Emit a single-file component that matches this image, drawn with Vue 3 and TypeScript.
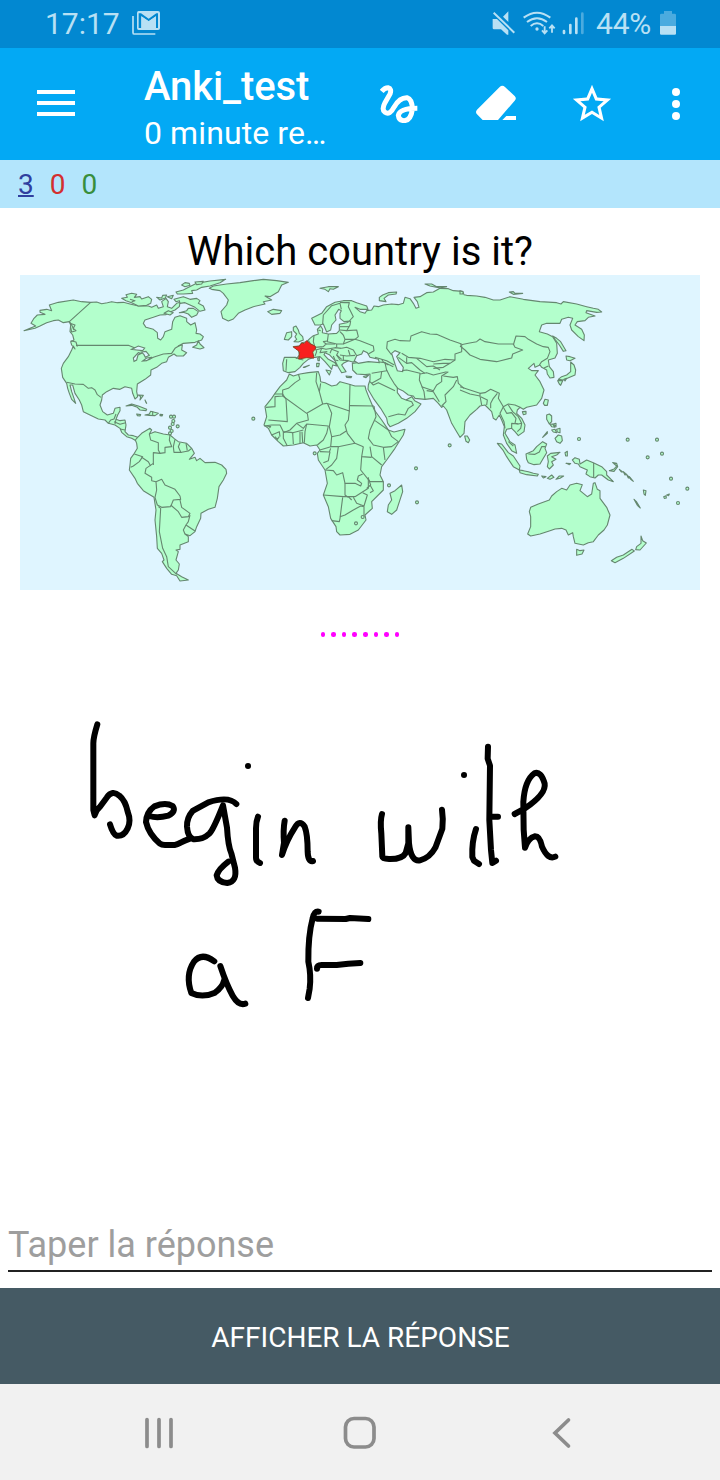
<script setup lang="ts">
type Pt = [number, number]
const at = (dx: number, dy: number, s: string): string =>
  s.split(' ').map(p => {
    const [x, y] = p.split(',').map(Number) as Pt
    return `${x + dx},${y + dy}`
  }).join(' ')

// Map sheets: each holds coordinates relative to its own corner
const nw = (s: string) => at(0, 0, s)
const mid = (s: string) => at(660, 0, s)
const ne = (s: string) => at(1320, 0, s)
const sw = (s: string) => at(240, 450, s)
const se = (s: string) => at(1320, 450, s)

const eurasia =
  mid('215,145 245,130 260,110 285,97 310,92 335,92 350,98 380,108 384,118 360,118 345,112 360,125 375,130 380,122 395,120 402,108 415,110 430,105 455,102 475,104 490,100 495,82 510,86 520,100 528,115 537,112 532,95 522,82 540,80 560,68 580,66 600,55 625,56 640,62 668,64 672,74') + ' ' +
  ne('20,76 50,78 75,82 100,90 120,90 150,80 190,88 240,95 290,98 303,102 310,95 350,102 380,110 400,115 415,118 425,126 410,127 380,122 378,128 405,138 385,142 375,152 352,155 345,165 365,178 373,195 372,212 355,200 335,180 330,165 338,145 325,142 305,148 300,160 260,160 245,165 238,185 262,192 278,200 290,220 292,250 285,264 265,270 268,290 280,305 282,322 270,324 262,312 260,300 245,292 240,285 225,292 222,280 205,295 215,302 235,302 225,315 240,335 252,360 245,385 230,405 200,412 190,418 180,412 172,420 170,430 185,445 195,465 192,485 175,497 165,485 155,475 140,478 135,490 150,515 165,525 170,550 155,542 140,520 130,495 133,470 125,450 118,435 108,450 100,445 95,425 75,405 60,408 50,418 30,435 15,455 12,490 0,502') + ' ' +
  mid('650,485 635,460 620,420 610,408 605,412 595,400 580,385 555,388 525,385 520,378 505,375 488,362 472,355 472,368 485,385 498,390 515,380 524,392 543,402 525,425 500,445 475,460 450,470 443,460 440,445 422,415 400,385 384,358 385,345 390,330 390,312 375,314 350,312 338,300 337,280 370,275 365,273 350,272 338,276 325,272 310,280 305,285 318,305 305,308 295,292 285,272 268,254 255,248 252,254 265,268 285,278 290,288 278,285 275,298 268,290 255,275 240,260 225,262 205,268 190,280 180,292 165,305 145,308 130,302 128,280 133,262 165,262 170,265 178,255 175,240 160,230 178,228 185,218 200,215 210,205 220,197 235,192 232,178 242,168 248,178 247,188 265,192 290,190 298,182 298,163 320,158 330,153 312,155 300,145 300,130 304,122 296,118 285,135 288,150 275,165 272,180 260,186 250,162 240,165 225,165 215,145')

const africa = mid('148,312 160,318 180,312 205,308 235,305 240,320 242,335 255,338 275,348 290,345 300,335 325,342 345,348 375,348 378,360 388,385 403,420 425,450 440,472 445,480 462,486 495,478 490,495 465,535 440,570 425,590 420,615 430,635 430,660 395,695 397,715 375,735 378,750 355,780 330,793 300,795 290,785 288,770 272,745 265,710 250,675 262,640 255,600 235,570 232,550 240,540 230,525 210,528 190,518 160,525 130,528 115,515 95,495 85,475 72,465 80,440 75,410 95,385 105,370 120,350 140,330')

const land: string[] = [
  eurasia,
  africa,
  // mainland North and Central America
  nw('12,182 30,175 47,168 33,160 42,145 52,135 75,133 60,127 60,121 80,118 95,122 88,105 115,97 160,90 185,95 212,97 230,96 245,101 262,98 275,95 292,98 310,97 330,102 355,108 385,108 395,112 410,105 415,115 430,110 425,95 438,85 445,95 442,110 455,115 470,100 480,97 478,110 465,120 445,128 438,134 420,135 400,142 375,150 370,160 378,172 400,178 412,188 413,205 422,210 430,200 435,185 455,178 458,155 465,142 480,137 500,145 500,155 512,165 525,158 530,180 528,190 540,192 550,200 545,210 525,217 490,220 475,228 487,225 485,240 500,248 490,258 470,258 462,252 445,262 440,275 425,280 410,292 393,300 392,315 375,328 352,342 350,365 353,380 345,387 338,370 335,355 315,350 300,358 280,355 260,365 247,375 245,390 240,405 248,425 262,435 280,430 285,415 300,412 300,422 293,435 288,448 300,452 315,450 318,465 315,485 325,495 340,497 353,502 348,512 335,505 320,500 305,487 300,475 285,465 265,460 255,450 235,447 210,435 190,425 185,405 178,390 165,370 158,345 150,345 155,365 162,385 167,400 155,388 148,370 143,355 140,340 128,322 124,295 130,280 145,260 155,240 160,228 165,237 155,225 152,215 162,210 158,195 150,185 152,165 148,155 130,158 115,150 100,152 80,158 60,168 45,175'),
  // South America
  sw('113,52 125,40 150,25 155,30 148,42 165,35 190,42 210,45 222,55 235,65 260,70 275,85 283,100 268,118 285,112 290,122 300,115 315,128 345,127 365,135 378,148 380,160 370,180 357,200 352,235 345,262 325,268 303,280 302,295 290,320 285,335 270,347 255,342 265,350 265,365 240,375 240,388 228,390 235,395 228,420 238,432 235,450 228,460 245,470 265,480 240,483 230,467 215,463 200,445 187,425 192,420 185,400 172,385 170,350 165,300 168,270 162,232 130,212 112,190 105,175 88,150 90,135 92,115 103,100 112,85 110,70 106,60'),
  // Greenland and Iceland
  nw('568,55 580,48 620,42 660,38 700,32 730,28 770,32 805,37 785,45 775,65 750,80 735,78 755,90 730,95 735,102 700,110 675,120 655,130 640,147 625,153 608,145 603,125 620,105 625,90 610,70 600,62 575,58'),
  mid('83,125 100,118 125,122 120,130 95,133'),
  // Arctic archipelago
  nw('305,85 322,82 318,74 335,70 350,73 343,82 360,80 365,87 385,80 395,88 392,100 380,106 355,108 335,98 318,92'),
  nw('410,82 425,84 428,76 440,75 436,84 420,90'),
  nw('442,80 460,76 455,86'),
  nw('462,88 490,80 510,88 530,85 540,92 535,100 550,108 555,120 540,124 525,112 510,105 495,98 480,100 478,92 468,95'),
  nw('478,128 500,122 505,115 520,115 535,125 530,135 515,142 505,132 490,127'),
  nw('432,130 445,122 460,128 450,135'),
  nw('468,66 490,60 500,55 530,40 570,33 617,28 600,38 570,48 545,52 530,60 515,62 518,70 490,72 472,72'),
  nw('485,45 495,38 508,40 510,46 495,50'),
  nw('525,36 550,34 545,42 530,44'),
  nw('518,232 530,225 535,212 540,222 552,233 540,237'),
  // Caribbean
  nw('318,408 335,402 355,408 380,418 378,422 360,420 352,412 335,406'),
  nw('375,435 388,432 392,424 415,430 405,437 388,436'),
  nw('350,432 362,434 360,438 352,437'),
  nw('420,433 428,434 426,438 420,437'),
  nw('355,375 370,376 360,390 362,380'),
  nw('375,390 380,400 378,398'),
  // British Isles and European islands
  mid('162,215 170,208 165,200 170,192 160,182 160,172 168,168 175,180 178,190 188,200 190,210 175,216'),
  mid('133,208 140,188 155,185 155,200 145,210'),
  mid('240,55 265,50 295,50 280,58 270,56 265,65 255,58'),
  mid('418,92 418,82 428,75 445,68 470,66 468,72 445,75 432,85 438,95'),
  mid('555,42 575,42 590,50 620,50 600,54 570,48'),
  mid('230,280 238,280 236,290 230,290'),
  mid('233,265 238,262 238,272 234,272'),
  mid('258,300 273,303 268,315'),
  mid('318,318 335,320 333,323 320,322'),
  mid('370,320 386,315 378,323'),
  mid('190,292 208,286 195,292'),
  mid('485,645 488,665 470,720 455,733 442,725 445,705 455,690 450,670 465,662'),
  // East Asian islands
  ne('148,66 160,65 165,70 188,70 160,73'),
  ne('0,62 10,66 8,72 0,72'),
  ne('278,198 290,205 302,215 318,242 310,244 298,225 285,208'),
  ne('318,258 330,260 345,265 330,272 320,270'),
  ne('332,276 342,285 347,300 345,315 322,325 310,330 295,328 305,320 320,315 332,305'),
  ne('293,332 308,332 302,346 298,342'),
  ne('312,328 320,325 315,333'),
  ne('250,400 255,388 265,390 262,406 254,406'),
  ne('187,425 198,424 198,432 190,434'),
  ne('260,435 268,432 275,438 275,455 268,462 260,448'),
  ne('270,463 278,462 285,472 275,470'),
  ne('280,462 288,460 288,470'),
  ne('275,480 285,478 290,488 280,486'),
  ne('290,478 300,475 300,488 292,486'),
  ne('285,505 295,495 305,498 307,512 300,520 290,515'),
  ne('248,502 262,485 262,490'),
  ne('14,498 22,498 29,510 25,518 18,514'),
  // Indonesia, Melanesia and Oceania
  se('112,70 125,72 145,98 160,108 180,138 178,150 160,140 140,110 130,92'),
  se('178,150 190,152 205,155 220,160 235,163 232,168 200,164 180,158'),
  se('198,102 220,92 230,80 248,65 260,72 255,85 260,98 250,115 240,132 222,134 205,128 200,118'),
  se('262,108 272,100 300,97 290,105 275,110 288,118 275,125 280,135 268,147 262,140 265,125'),
  se('245,168 258,170 250,174'), se('262,175 275,165 282,172 270,178'), se('288,178 298,168 311,168 300,175'),
  se('315,98 322,94 322,108 317,108'), se('318,130 332,131 328,134'),
  se('337,120 345,113 358,118 360,132 380,120 400,128 425,140 440,155 440,165 460,185 445,180 425,165 415,165 405,174 390,170 378,162 382,150 360,140 355,132 345,130'),
  se('448,152 462,147 470,138 458,128 470,130 473,140 462,154'),
  se('478,148 488,156 484,156'), se('490,155 500,163 495,165'), se('500,164 510,174 505,174'), se('508,170 520,184 512,178'),
  se('550,210 558,212 556,226 552,222'),
  se('522,238 530,246 541,264 532,256'),
  se('611,230 618,227 619,234 613,235'), se('620,225 628,222 626,227'),
  se('212,262 235,252 268,240 275,228 290,215 305,205 320,210 330,195 350,190 367,194 360,212 382,230 395,222 400,190 405,188 412,208 420,212 420,235 440,262 450,285 442,315 432,330 415,345 400,365 385,368 370,375 345,370 340,350 338,338 325,345 318,330 305,325 285,327 270,332 240,342 212,348 203,342 212,320 212,290 208,275'),
  se('350,388 360,392 372,390 366,402 350,406'),
  se('543,348 548,362 559,369 540,390 527,389 530,380 543,370'),
  se('516,388 523,393 490,415 465,428 454,422 470,412 490,405')
]

const water: string[] = [
  mid('343,272 350,257 365,252 370,242 382,248 390,262 415,268 418,278 385,275 355,280'),
  mid('455,250 465,242 480,248 470,260 478,275 490,292 488,305 472,302 466,285'),
  nw('335,238 355,228 374,234 368,242 350,240'),
  nw('342,274 340,264 355,248 364,250 354,255 350,270'),
  nw('364,246 378,244 388,256 376,262 372,254'),
  nw('368,273 380,264 396,262 380,272')
]

const borders: string[] = [
  nw('212,97 148,155 155,165 162,180'), nw('168,226 325,226 345,234'),
  nw('385,270 400,262 430,252 455,250 465,235 480,226'),
  nw('140,337 165,342 190,343 205,355 215,353 225,360 232,374 243,382'),
  nw('265,460 272,450 282,447 288,432'), nw('282,455 300,463 317,458'), nw('300,477 315,480'), nw('288,448 285,462'),
  nw('150,160 165,165 160,175 168,182 155,186 152,172'), nw('152,212 168,216 172,230'),
  nw('330,88 345,92 335,95'), nw('398,424 398,436'),
  sw('148,42 152,60 175,68 175,90 180,100 160,98 160,135'),
  sw('103,102 128,110 118,125 100,138 92,142'), sw('125,112 145,125 152,138'),
  sw('160,130 138,145 135,160 155,172 155,182 168,185'),
  sw('168,185 185,178 195,195 225,208 240,228 242,238 220,240 212,260 185,262 172,255 165,232 170,210 168,185'),
  sw('212,255 235,275 245,292 265,290 270,280 245,262 240,240'),
  sw('175,260 182,265 180,300 178,335 188,385 200,410 205,440 230,463'),
  sw('270,285 265,305 258,315 285,333'), sw('258,315 250,330 255,342'),
  sw('180,100 195,98 195,82 215,80 208,60 210,45'), sw('225,58 220,80 222,97 245,97 265,93 275,85'),
  sw('240,68 235,80 242,96'), sw('258,70 262,92'),
  // Africa
  mid('175,312 180,328 165,338 145,355 128,360 128,378 105,380 105,410 78,412'), mid('105,372 128,372 138,388'),
  mid('128,378 200,430 248,402 238,365 228,335 230,308'), mid('238,365 242,340'),
  mid('138,388 142,455 85,450'), mid('248,402 260,400 328,423 330,342'), mid('330,407 402,408'),
  mid('328,423 325,450 315,465 322,490 345,520 370,530'), mid('262,400 275,430 268,470 275,500 300,495 320,482'),
  mid('202,430 205,450 170,460 150,480 130,488'), mid('200,462 195,485 193,518'), mid('170,460 190,475 200,462 265,468 260,490 250,510 232,525'),
  mid('275,500 272,530 240,540'), mid('272,530 295,530 345,520'),
  mid('402,408 408,440 390,480 385,505 400,525 430,532 455,530 475,515 455,500 445,480 405,452'),
  mid('390,530 395,560 425,585'), mid('430,532 435,570'), mid('370,530 365,560 395,562'),
  mid('365,560 362,600 390,635 430,635'), mid('295,530 290,565 275,585 258,598'),
  mid('255,600 280,602 290,615 308,608 315,640 345,640 362,648 365,640 352,630 355,618 368,612'),
  mid('270,545 265,572 250,578'), mid('240,545 268,546 272,535'), mid('250,675 310,680 345,680'), mid('315,640 315,675 325,682'),
  mid('345,680 385,655 385,622'), mid('380,655 392,645 385,625'), mid('390,645 400,662 390,668'),
  mid('340,682 350,700 372,708 382,675 368,668'), mid('308,682 300,745 298,755 275,752'),
  mid('300,740 315,735 340,720 362,708 372,710 372,740'), mid('325,680 335,690'),
  mid('95,495 118,485 120,500'), mid('130,485 130,505 142,528'), mid('158,488 160,522'), mid('180,485 180,520'), mid('186,485 188,518'),
  mid('72,468 95,465 120,465 130,485 158,488 190,480'), mid('80,468 92,470 88,474'), mid('105,500 112,508 118,500'),
  // Europe
  mid('248,162 250,135 275,107 300,100 304,118'), mid('300,97 315,98 328,98 325,110 340,140 328,153'),
  mid('300,170 328,170'), mid('300,180 320,182 330,165 332,152'), mid('320,182 350,180 355,200 345,208 315,208 310,195'),
  mid('265,192 262,215 290,222 310,222 315,208'), mid('300,185 310,195'),
  mid('222,197 220,215 225,232 250,230 258,222 250,215 262,213'),
  mid('310,222 345,208 360,212 400,228 402,242 385,252'), mid('305,235 320,232 340,240 350,257'), mid('300,255 320,258 345,256'),
  mid('140,268 138,302'), mid('165,262 180,268 190,270'), mid('228,240 245,235 258,238 285,233 305,235'), mid('258,222 285,222'),
  mid('270,250 275,238 295,245 290,255 305,268'), mid('225,232 230,245 225,258'), mid('205,212 212,222 222,228'),
  mid('290,255 300,270 325,272'), mid('280,258 285,270 295,272'), mid('245,235 240,248 262,245'), mid('290,222 290,232'),
  mid('310,258 310,272'), mid('325,240 330,255'), mid('235,180 242,182'),
  // Asia
  mid('418,276 435,278 440,302 395,310'), mid('405,262 440,272 463,285'), mid('435,278 460,290'), mid('425,268 430,276 445,285'),
  mid('440,300 450,320 462,340 474,356'), mid('486,302 500,300 540,310 538,330 552,365 555,388'),
  mid('390,335 400,345 415,338 440,350 465,362'), mid('425,305 422,325 395,340'), mid('445,440 475,432 495,435 505,415 520,405 515,395 498,390'),
  mid('455,255 440,235 442,215 465,208 480,212 510,213 513,198 545,185 570,192 590,193 630,210 665,222'),
  mid('485,250 505,262 540,265 560,270 580,275 615,268 645,270 645,252 665,245 665,225'),
  mid('475,262 500,280 515,278 540,300 555,310'), mid('500,262 500,280'), mid('540,312 560,308 580,315 620,305'), mid('530,265 560,290 580,288 600,300'),
  mid('545,350 580,362 590,345 605,335 605,318 625,305'), mid('580,282 610,280 630,280 645,270'), mid('580,295 610,292 630,280'),
  mid('560,362 580,365 598,395'), mid('650,330 640,350 615,375 618,395 605,408'), mid('610,318 640,322 652,320 655,340 672,355'),
  ne('0,225 25,220 50,215 60,207 75,215 115,222 160,222 165,232 188,240 158,252 155,264 110,275 60,268 30,255 15,240 0,228'),
  ne('160,225 168,198 195,200 205,208 230,222 250,230 265,232 270,245 262,265 245,275 238,285'),
  ne('252,294 265,288'),
  ne('0,350 30,360 60,370 75,368 92,358 118,370 115,385 130,410 145,402 165,405 180,412'),
  ne('0,360 30,372 60,378'), ne('60,370 60,378 65,405'), ne('62,380 82,390 80,405'), ne('112,370 100,385 92,400 92,415'),
  ne('130,410 120,430 132,455 135,475'), ne('130,412 140,430 155,428 168,445 165,460 175,462'),
  ne('155,475 155,460 175,462 185,460 182,475 172,485'), ne('145,405 158,425 175,440 185,460'),
  se('205,102 225,103 238,96 245,80 256,80'), se('401,129 401,172'), se('145,65 160,78')
]

const islets: Pt[] = [
  [453, 440], [462, 440], [460, 453], [458, 462], [473, 469], [450, 473], [455, 483], [450, 490],
  [700, 446], [884, 550], [1107, 646], [1188, 595], [1191, 697], [1289, 526], [1008, 760], [1028, 741],
  [1677, 507], [1823, 509], [1911, 509], [1926, 551], [1883, 562], [1953, 626], [2002, 656], [1974, 699]
]

const strokesLeft: string[] = [
  'M82 73Q70 112 70 130L70 330 L74 346 Q76 332 90 320L110 293Q127 268 148 287 Q166 302 173 335 Q184 363 173 385 Q161 410 140 407 Q129 403 120 373',
  'M238 348 Q261 356 295 347 Q320 334 308 318 Q287 306 253 319 Q229 336 228 366 Q236 402 270 431Q275 435 285 435L314 435Q322 434 332 428Q345 421 362 415',
  'M499 312 Q476 287 415 307 L368 333 Q350 353 351 380 Q353 413 371 418 Q399 419 418 401 Q430 389 459 316 L471 383 Q474 437 484 460 L495 503 Q502 545 472 549 Q442 546 440 526 Q445 508 475 485',
  'M564 350Q558 365 558 385L558 473Q558 484 570 489',
  'M644 362 Q639 390 642 428 L636 465 Q649 422 675 382 Q689 357 704 380 Q713 403 713 455 Q714 487 729 483',
  'M433 784 Q395 756 372 785 Q345 825 364 879 Q397 895 435 878 Q458 861 462 842',
  'M451 798 Q470 855 488 887 Q506 918 526 911'
]
const strokesRight: string[] = [
  'M246 342 Q240 362 244 400 L247 470 Q248 477 267 477 Q307 478 317 459 L325 430 L325 382 L327 430 Q333 486 360 481 Q389 474 406 443 L427 386 Q430 354 426 329',
  'M528 387 Q515 425 517 471 L522 482 L537 492',
  'M564 140 L563 176 L570 197 L568 360 L573 450 L577 489 L588 482',
  'M572 350 L594 350',
  'M644 342 L675 325 Q739 281 734 251 Q723 212 703 220 Q674 241 670 306 L671 389 L675 443 Q685 414 704 409 Q720 408 726 440 Q744 481 766 470',
  'M56 635 Q43 633 38 655 Q24 708 25 785 Q34 826 29 866 L24 894',
  'M52 656 L137 657 L150 654 L205 657',
  'M51 806 Q51 795 65 795 L110 795 L145 791 L181 789'
]
const typed = defineModel<string>('typed', { default: '' })
</script>

<template>
  <div class="screen">
    <div class="status">
      <span class="clock">17:17</span>
      <svg class="mail" width="28" height="24" viewBox="0 0 84 72">
        <path d="M3 15V65Q3 69 7 69H70" fill="none" stroke="currentColor" stroke-width="5" />
        <path fill-rule="evenodd" fill="currentColor" d="M20 0H78Q84 0 84 6V51Q84 57 78 57H20Q15 57 15 51V6Q15 0 20 0ZM20 7V51H28V16L50 31L72 16V51H78V7H73L50 23L27 7Z" />
        <path fill="currentColor" d="M28 16L50 31L72 16V51H28Z" />
      </svg>
      <span class="gap"></span>
      <svg class="mute" width="24" height="24" viewBox="0 0 72 72" fill="currentColor">
        <path d="M5 24H18L52 58V71H48L30 55H9Q5 55 5 51ZM36 17L52 1V33Z" />
        <path d="M8 5L70 65" stroke="currentColor" stroke-width="6" />
      </svg>
      <svg class="wifi" width="33" height="24" viewBox="0 0 99 72" fill="none" stroke="currentColor" stroke-width="6">
        <path d="M2 20Q42-10 82 20M12 33Q42 10 72 33M23 45Q42 29 61 45" />
        <circle cx="42" cy="54" r="5" fill="currentColor" stroke="none" />
        <path d="M65 46V66M57 58L65 67L73 58M87 65V44M79 52L87 43L95 52" stroke-width="5.5" />
      </svg>
      <svg class="signal" width="23" height="24" viewBox="0 0 69 72" stroke="currentColor" stroke-width="8" stroke-linecap="round">
        <path d="M6 60V66M25 42V66M43 23V66" /><path d="M61 8V66" opacity=".4" />
      </svg>
      <span class="percent">44%</span>
      <svg class="battery" width="16" height="24" viewBox="0 0 48 72" fill="currentColor">
        <path d="M12 0H36V8H44Q48 8 48 12V45H0V12Q0 8 4 8H12Z" opacity=".4" /><path d="M0 45H48V68Q48 71 44 71H4Q0 71 0 68Z" />
      </svg>
    </div>

    <header class="bar">
      <svg class="menu" width="38" height="28" viewBox="0 0 38 28" fill="#fff"><path d="M0 1H38V5H0ZM0 12H38V16H0ZM0 23H38V27H0Z" /></svg>
      <div class="titles">
        <div class="title">Anki_test</div>
        <div class="subtitle">0 minute re…</div>
      </div>
      <svg class="squiggle" width="38" height="38" viewBox="0 0 114 114" fill="none" stroke="#fff" stroke-width="15">
        <path d="M5 19Q14 8 24 8Q36 11 30 27L15 53Q4 74 15 82Q29 92 43 65Q59 37 81 38Q97 43 97 73Q93 105 73 107Q57 107 55 91Q60 70 112 70" />
      </svg>
      <svg class="eraser" width="40" height="36" viewBox="0 0 120 108" fill="#fff">
        <path d="M71 6Q79-1 87 6L116 33Q123 40 116 47L66 105H20L3 88Q-3 81 3 74ZM91 93H120V105H79Z" />
      </svg>
      <svg class="star" width="46" height="46" viewBox="0 0 24 24" fill="#fff">
        <path d="M22 9.24l-7.19-.62L12 2 9.190 8.63 2 9.24l5.460 4.730L5.820 21 12 17.270 18.180 21l-1.630-7.030L22 9.240zM12 15.400l-3.760 2.270 1-4.280-3.320-2.880 4.380-.38L12 6.100l1.710 4.040 4.380.38-3.320 2.880 1 4.280L12 15.400z" />
      </svg>
      <svg class="more" width="8" height="32" viewBox="0 0 8 32" fill="#fff"><circle cx="4" cy="4" r="4" /><circle cx="4" cy="16" r="4" /><circle cx="4" cy="28" r="4" /></svg>
    </header>

    <div class="counts"><span class="new">3</span><span class="learn">0</span><span class="due">0</span></div>

    <main class="card">
      <div class="question">Which country is it?</div>
      <svg class="map" viewBox="0 15 2040 945" width="680" height="315">
        <g class="land"><polygon v-for="(p, i) in land" :key="i" :points="p" /></g>
        <g class="water"><polygon v-for="(p, i) in water" :key="i" :points="p" /></g>
        <g class="borders"><polyline v-for="(p, i) in borders" :key="i" :points="p" /></g>
        <g class="land"><circle v-for="([x, y], i) in islets" :key="i" :cx="x" :cy="y" r="4.5" /></g>
        <polygon class="marker" points="860,212 870,221 886,229 886,237 878,246 882,264 859,263 836,267 839,246 832,240 820,231 838,228 846,219 852,221" />
      </svg>
      <div class="dots"><i v-for="n in 8" :key="n"></i></div>
      <svg class="ink" width="720" height="1080" viewBox="0 208 720 1080">
        <g transform="translate(70 700) scale(.33333)">
          <path v-for="(d, i) in strokesLeft" :key="i" :d="d" /><path d="M534 198h.1" />
        </g>
        <g transform="translate(300 700) scale(.33333)">
          <path v-for="(d, i) in strokesRight" :key="i" :d="d" /><path d="M492 225h.1" />
        </g>
      </svg>
    </main>

    <div class="answer"><input v-model="typed" type="text" placeholder="Taper la réponse" /></div>
    <button class="show" type="button">AFFICHER LA RÉPONSE</button>

    <nav class="nav">
      <svg class="recents" width="30" height="32" viewBox="0 0 30 32"><path d="M3 2.500V29.500M15 2.500V29.500M27 2.500V29.500" /></svg>
      <svg class="home" width="34" height="34" viewBox="0 0 34 34"><rect x="2.500" y="2.500" width="28.500" height="28.500" rx="8.500" /></svg>
      <svg class="back" width="20" height="32" viewBox="0 0 20 32"><path d="M16.500 3L3 16L16.500 29" /></svg>
    </nav>
  </div>
</template>

<style>
body { margin: 0; background: #fff; }
</style>
<style scoped>
.screen { width: 720px; height: 1480px; display: flex; flex-direction: column; overflow: hidden; font-family: Roboto, "Liberation Sans", sans-serif; background: #fff; }
.screen * { box-sizing: border-box; }
svg { display: block; flex: none; }
.status { height: 48px; flex: none; background: #0288d1; color: #b8e0f4; display: flex; align-items: center; padding: 0 44px 2px 45px; font-size: 30px; }
.clock { width: 87px; }
.gap { flex: 1; }
.wifi { margin-left: 8px; }
.signal { margin-left: 6px; }
.percent { margin-left: 11px; font-size: 30px; letter-spacing: -.2px; width: 57px; padding-top: 1px; }
.battery { margin-left: 7px; }
.bar { height: 112px; flex: none; background: #03a9f4; color: #fff; display: flex; align-items: center; padding-left: 37px; }
.menu { margin-top: -2px; }
.titles { margin-left: 69px; width: 237px; white-space: nowrap; padding-top: 12px; }
.title { font-size: 40px; font-weight: 500; line-height: 47px; letter-spacing: -.1px; }
.subtitle { font-size: 32px; line-height: 47px; letter-spacing: .1px; }
.squiggle { margin-left: -1px; }
.eraser { margin-left: 58px; margin-top: -2px; }
.star { margin-left: 53px; }
.more { margin-left: 57px; }
.counts { height: 48px; flex: none; background: #b3e5fc; display: flex; align-items: center; gap: 16px; padding: 0 18px; font-size: 28px; }
.new { color: #303f9f; text-decoration: underline; text-decoration-thickness: 1.500px; }
.learn { color: #d32f2f; }
.due { color: #388e3c; }
.card { position: relative; flex: 1; padding: 20px 20px 0; }
.question { height: 47px; line-height: 47px; font-size: 40px; text-align: center; color: #000; }
.map { background: #dff5ff; }
.land { fill: #b3ffcc; stroke: #65876f; stroke-width: 3.300; stroke-linejoin: round; }
.water { fill: #dff5ff; stroke: #65876f; stroke-width: 3.300; }
.borders { fill: none; stroke: #65876f; stroke-width: 3.300; stroke-linejoin: round; }
.marker { fill: #f8201f; stroke: #a03a20; stroke-width: 3; }
.dots { display: flex; justify-content: center; gap: 6.100px; margin-top: 42px; }
.dots i { width: 4.500px; height: 4.500px; border-radius: 50%; background: #f0f; }
.ink { position: absolute; left: 0; top: 0; pointer-events: none; }
.ink path { fill: none; stroke: #000; stroke-width: 18; stroke-linecap: round; stroke-linejoin: round; }
.answer { height: 80px; flex: none; padding: 8px 8px 16px; }
.answer input { display: block; width: 100%; height: 56px; border: 0; border-bottom: 2px solid #212121; outline: 0; padding: 3px 0 0; font: 36px Roboto, "Liberation Sans", sans-serif; background: transparent; color: #000; }
.answer input::placeholder { color: #9e9e9e; opacity: 1; }
.show { height: 96px; flex: none; border: 0; background: #455a64; color: #fff; font: 28px Roboto, "Liberation Sans", sans-serif; padding: 2px 0 0 1px; }
.nav { height: 96px; flex: none; background: #f1f1f1; display: flex; align-items: center; padding: 2px 0 0 144px; }
.nav svg { fill: none; stroke: #8c8c8c; stroke-width: 3.700; stroke-linecap: round; }
.home { margin-left: 169px; }
.back { margin-left: 175px; }
</style>
